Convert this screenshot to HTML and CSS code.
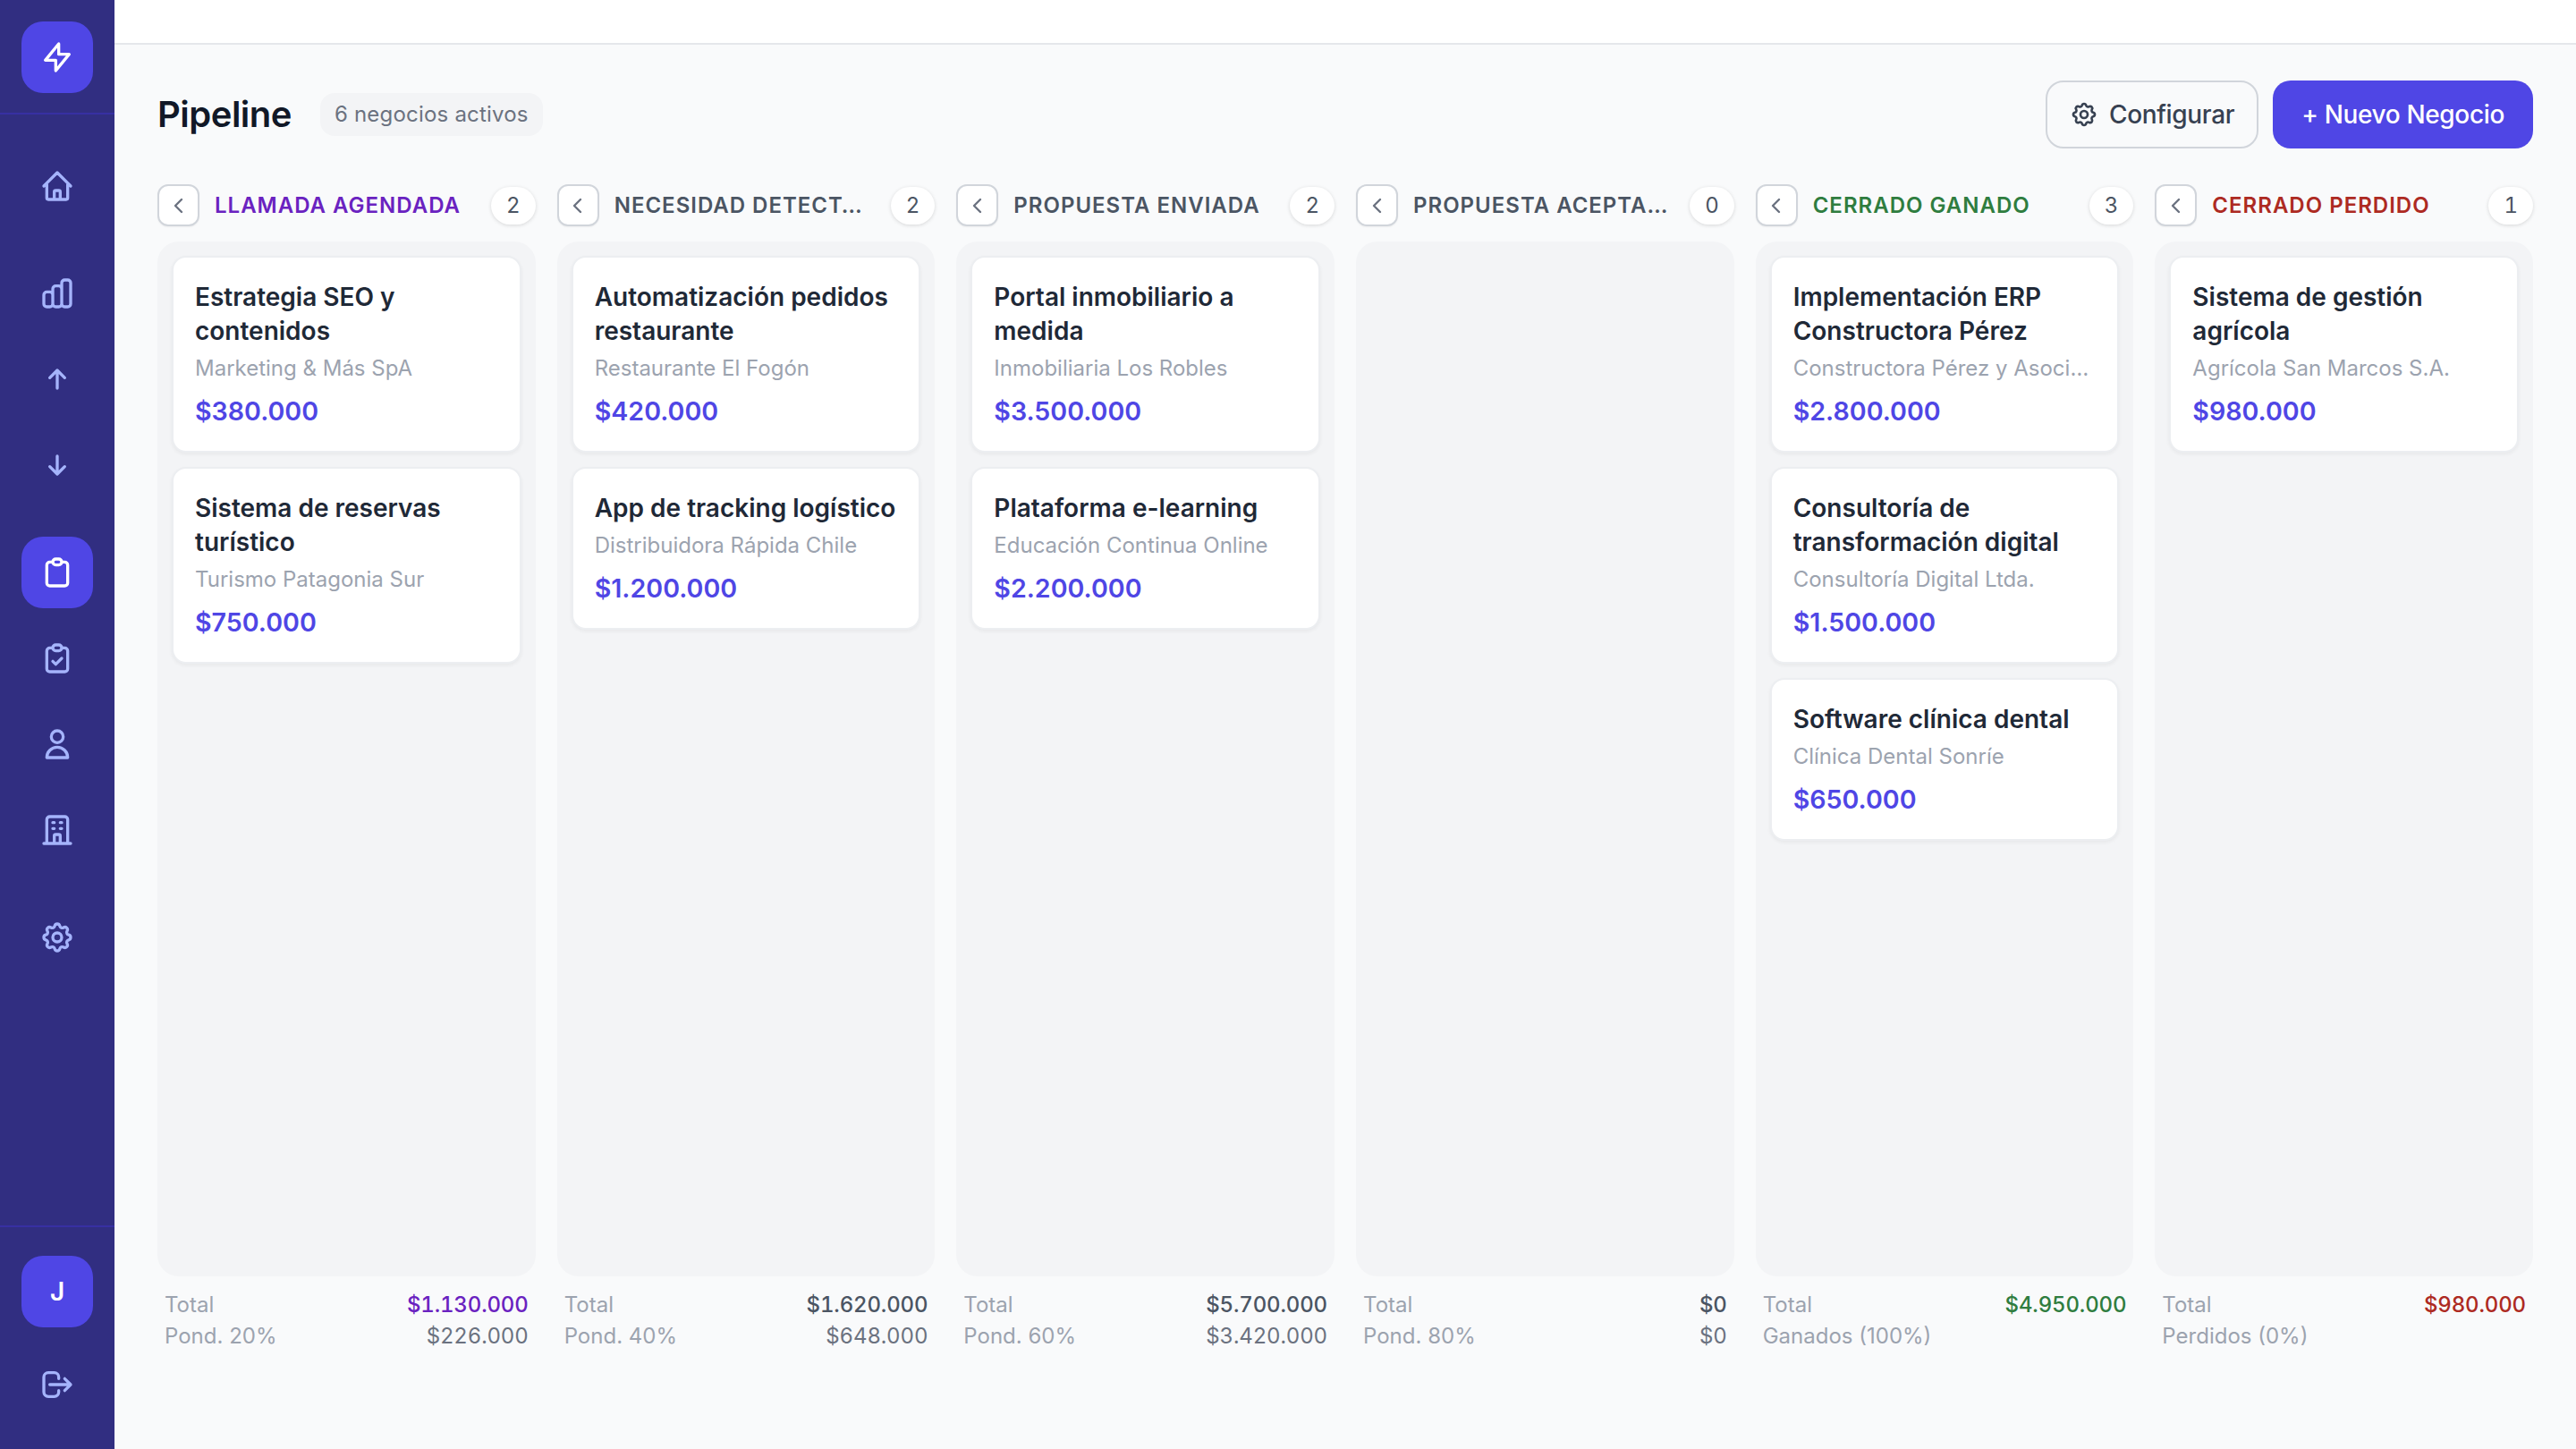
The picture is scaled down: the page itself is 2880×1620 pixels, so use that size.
FILE: index.html
```html
<!DOCTYPE html>
<html lang="es">
<head>
    <meta charset="UTF-8">
    <title>Pipeline</title>
    <link rel="stylesheet" href="styles.css">
</head>
<body>
    <aside class="sidebar">
        <div class="sidebar-top">
            <div class="nav-item active">
                <svg class="icon" viewBox="0 0 24 24"><path d="M13 10V3L4 14h7v7l9-11h-7z"/></svg>
            </div>
        </div>
        <nav class="sidebar-nav">
            <div class="nav-item">
                <svg class="icon" viewBox="0 0 24 24"><path d="M3 12l2-2m0 0l7-7 7 7M5 10v10a1 1 0 0 0 1 1h3m10-11l2 2m-2-2v10a1 1 0 0 1-1 1h-3m-6 0a1 1 0 0 0 1-1v-4a1 1 0 0 1 1-1h2a1 1 0 0 1 1 1v4a1 1 0 0 0 1 1m-6 0h6"/></svg>
            </div>
            <div class="nav-group">
                <div class="nav-item">
                    <svg class="icon" viewBox="0 0 24 24"><path d="M9 19v-6a2 2 0 0 0-2-2H5a2 2 0 0 0-2 2v6a2 2 0 0 0 2 2h2a2 2 0 0 0 2-2zm0 0V9a2 2 0 0 1 2-2h2a2 2 0 0 1 2 2v10m-6 0a2 2 0 0 0 2 2h2a2 2 0 0 0 2-2m0 0V5a2 2 0 0 1 2-2h2a2 2 0 0 1 2 2v14a2 2 0 0 1-2 2h-2a2 2 0 0 1-2-2z"/></svg>
                </div>
                <div class="nav-item">
                    <svg class="icon" viewBox="0 0 24 24"><path d="M7 11l5-5m0 0l5 5m-5-5v12"/></svg>
                </div>
                <div class="nav-item">
                    <svg class="icon" viewBox="0 0 24 24"><path d="M17 13l-5 5m0 0l-5-5m5 5V6"/></svg>
                </div>
            </div>
            <div class="nav-group">
                <div class="nav-item active">
                    <svg class="icon" viewBox="0 0 24 24"><path d="M9 5H7a2 2 0 0 0-2 2v12a2 2 0 0 0 2 2h10a2 2 0 0 0 2-2V7a2 2 0 0 0-2-2h-2M9 5a2 2 0 0 0 2 2h2a2 2 0 0 0 2-2M9 5a2 2 0 0 1 2-2h2a2 2 0 0 1 2 2"/></svg>
                </div>
                <div class="nav-item">
                    <svg class="icon" viewBox="0 0 24 24"><path d="M9 5H7a2 2 0 0 0-2 2v12a2 2 0 0 0 2 2h10a2 2 0 0 0 2-2V7a2 2 0 0 0-2-2h-2M9 5a2 2 0 0 0 2 2h2a2 2 0 0 0 2-2M9 5a2 2 0 0 1 2-2h2a2 2 0 0 1 2 2m-6 9l2 2 4-4"/></svg>
                </div>
                <div class="nav-item">
                    <svg class="icon" viewBox="0 0 24 24"><path d="M16 7a4 4 0 1 1-8 0 4 4 0 0 1 8 0zM12 14a7 7 0 0 0-7 7h14a7 7 0 0 0-7-7z"/></svg>
                </div>
                <div class="nav-item">
                    <svg class="icon" viewBox="0 0 24 24"><path d="M19 21V5a2 2 0 0 0-2-2H7a2 2 0 0 0-2 2v16m14 0h2m-2 0h-5m-9 0H3m2 0h5M9 7h1m-1 4h1m4-4h1m-1 4h1m-5 10v-5a1 1 0 0 1 1-1h2a1 1 0 0 1 1 1v5m-4 0h4"/></svg>
                </div>
            </div>
            <div class="nav-group">
                <div class="nav-item">
                    <svg class="icon" viewBox="0 0 24 24"><path d="M10.325 4.317c.426-1.756 2.924-1.756 3.35 0a1.724 1.724 0 0 0 2.573 1.066c1.543-.94 3.31.826 2.37 2.37a1.724 1.724 0 0 0 1.065 2.572c1.756.426 1.756 2.924 0 3.35a1.724 1.724 0 0 0-1.066 2.573c.94 1.543-.826 3.31-2.37 2.37a1.724 1.724 0 0 0-2.572 1.065c-.426 1.756-2.924 1.756-3.35 0a1.724 1.724 0 0 0-2.573-1.066c-1.543.94-3.31-.826-2.37-2.37a1.724 1.724 0 0 0-1.065-2.572c-1.756-.426-1.756-2.924 0-3.35a1.724 1.724 0 0 0 1.066-2.573c-.94-1.543.826-3.31 2.37-2.37.996.608 2.296.07 2.572-1.065z"/><path d="M15 12a3 3 0 1 1-6 0 3 3 0 0 1 6 0z"/></svg>
                </div>
            </div>
        </nav>
        <div class="sidebar-bottom">
            <div class="nav-item active avatar">J</div>
            <div class="nav-item">
                <svg class="icon" viewBox="0 0 24 24"><path d="M17 16l4-4m0 0l-4-4m4 4H7m6 4v1a3 3 0 0 1-3 3H6a3 3 0 0 1-3-3V7a3 3 0 0 1 3-3h4a3 3 0 0 1 3 3v1"/></svg>
            </div>
        </div>
    </aside>

    <div class="page">
        <div class="topbar"></div>
        <main class="main">
            <div class="header">
                <h1>Pipeline</h1>
                <span class="header-badge">6 negocios activos</span>
                <div class="header-actions">
                    <button class="btn btn-outline">
                        <svg class="btn-icon" viewBox="0 0 24 24"><path d="M10.325 4.317c.426-1.756 2.924-1.756 3.35 0a1.724 1.724 0 0 0 2.573 1.066c1.543-.94 3.31.826 2.37 2.37a1.724 1.724 0 0 0 1.065 2.572c1.756.426 1.756 2.924 0 3.35a1.724 1.724 0 0 0-1.066 2.573c.94 1.543-.826 3.31-2.37 2.37a1.724 1.724 0 0 0-2.572 1.065c-.426 1.756-2.924 1.756-3.35 0a1.724 1.724 0 0 0-2.573-1.066c-1.543.94-3.31-.826-2.37-2.37a1.724 1.724 0 0 0-1.065-2.572c-1.756-.426-1.756-2.924 0-3.35a1.724 1.724 0 0 0 1.066-2.573c-.94-1.543.826-3.31 2.37-2.37.996.608 2.296.07 2.572-1.065z"/><path d="M15 12a3 3 0 1 1-6 0 3 3 0 0 1 6 0z"/></svg>
                        Configurar
                    </button>
                    <button class="btn btn-primary">+ Nuevo Negocio</button>
                </div>
            </div>

            <div class="board">
                <section class="column purple">
                    <div class="column-head">
                        <button class="chevron"><svg viewBox="0 0 24 24"><path d="M15 19l-7-7 7-7"/></svg></button>
                        <span class="column-title">Llamada agendada</span>
                        <span class="count">2</span>
                    </div>
                    <div class="column-body">
                        <div class="card">
                            <div class="card-title">Estrategia SEO y contenidos</div>
                            <div class="card-client">Marketing &amp; Más SpA</div>
                            <div class="card-value">$380.000</div>
                        </div>
                        <div class="card">
                            <div class="card-title">Sistema de reservas turístico</div>
                            <div class="card-client">Turismo Patagonia Sur</div>
                            <div class="card-value">$750.000</div>
                        </div>
                    </div>
                    <div class="column-foot">
                        <div class="foot-row"><span>Total</span><span class="foot-total">$1.130.000</span></div>
                        <div class="foot-row"><span>Pond. 20%</span><span class="foot-weighted">$226.000</span></div>
                    </div>
                </section>

                <section class="column">
                    <div class="column-head">
                        <button class="chevron"><svg viewBox="0 0 24 24"><path d="M15 19l-7-7 7-7"/></svg></button>
                        <span class="column-title">Necesidad detectada</span>
                        <span class="count">2</span>
                    </div>
                    <div class="column-body">
                        <div class="card">
                            <div class="card-title">Automatización pedidos restaurante</div>
                            <div class="card-client">Restaurante El Fogón</div>
                            <div class="card-value">$420.000</div>
                        </div>
                        <div class="card">
                            <div class="card-title">App de tracking logístico</div>
                            <div class="card-client">Distribuidora Rápida Chile</div>
                            <div class="card-value">$1.200.000</div>
                        </div>
                    </div>
                    <div class="column-foot">
                        <div class="foot-row"><span>Total</span><span class="foot-total">$1.620.000</span></div>
                        <div class="foot-row"><span>Pond. 40%</span><span class="foot-weighted">$648.000</span></div>
                    </div>
                </section>

                <section class="column">
                    <div class="column-head">
                        <button class="chevron"><svg viewBox="0 0 24 24"><path d="M15 19l-7-7 7-7"/></svg></button>
                        <span class="column-title">Propuesta enviada</span>
                        <span class="count">2</span>
                    </div>
                    <div class="column-body">
                        <div class="card">
                            <div class="card-title">Portal inmobiliario a medida</div>
                            <div class="card-client">Inmobiliaria Los Robles</div>
                            <div class="card-value">$3.500.000</div>
                        </div>
                        <div class="card">
                            <div class="card-title">Plataforma e-learning</div>
                            <div class="card-client">Educación Continua Online</div>
                            <div class="card-value">$2.200.000</div>
                        </div>
                    </div>
                    <div class="column-foot">
                        <div class="foot-row"><span>Total</span><span class="foot-total">$5.700.000</span></div>
                        <div class="foot-row"><span>Pond. 60%</span><span class="foot-weighted">$3.420.000</span></div>
                    </div>
                </section>

                <section class="column">
                    <div class="column-head">
                        <button class="chevron"><svg viewBox="0 0 24 24"><path d="M15 19l-7-7 7-7"/></svg></button>
                        <span class="column-title">Propuesta aceptada</span>
                        <span class="count">0</span>
                    </div>
                    <div class="column-body"></div>
                    <div class="column-foot">
                        <div class="foot-row"><span>Total</span><span class="foot-total">$0</span></div>
                        <div class="foot-row"><span>Pond. 80%</span><span class="foot-weighted">$0</span></div>
                    </div>
                </section>

                <section class="column green">
                    <div class="column-head">
                        <button class="chevron"><svg viewBox="0 0 24 24"><path d="M15 19l-7-7 7-7"/></svg></button>
                        <span class="column-title">Cerrado ganado</span>
                        <span class="count">3</span>
                    </div>
                    <div class="column-body">
                        <div class="card">
                            <div class="card-title">Implementación ERP Constructora Pérez</div>
                            <div class="card-client">Constructora Pérez y Asociados</div>
                            <div class="card-value">$2.800.000</div>
                        </div>
                        <div class="card">
                            <div class="card-title">Consultoría de transformación digital</div>
                            <div class="card-client">Consultoría Digital Ltda.</div>
                            <div class="card-value">$1.500.000</div>
                        </div>
                        <div class="card">
                            <div class="card-title">Software clínica dental</div>
                            <div class="card-client">Clínica Dental Sonríe</div>
                            <div class="card-value">$650.000</div>
                        </div>
                    </div>
                    <div class="column-foot">
                        <div class="foot-row"><span>Total</span><span class="foot-total">$4.950.000</span></div>
                        <div class="foot-row"><span>Ganados (100%)</span></div>
                    </div>
                </section>

                <section class="column red">
                    <div class="column-head">
                        <button class="chevron"><svg viewBox="0 0 24 24"><path d="M15 19l-7-7 7-7"/></svg></button>
                        <span class="column-title">Cerrado perdido</span>
                        <span class="count">1</span>
                    </div>
                    <div class="column-body">
                        <div class="card">
                            <div class="card-title">Sistema de gestión agrícola</div>
                            <div class="card-client">Agrícola San Marcos S.A.</div>
                            <div class="card-value">$980.000</div>
                        </div>
                    </div>
                    <div class="column-foot">
                        <div class="foot-row"><span>Total</span><span class="foot-total">$980.000</span></div>
                        <div class="foot-row"><span>Perdidos (0%)</span></div>
                    </div>
                </section>
            </div>
        </main>
    </div>
</body>
</html>
```

FILE: styles.css
```css
* {
    box-sizing: border-box;
}
html, body {
    height: 100%;
}
body {
    margin: 0;
    display: flex;
    font-family: "Inter", "Noto Sans", sans-serif;
    background-color: #f9fafb;
    color: #111827;
}

/* sidebar */
.sidebar {
    width: 128px;
    flex-shrink: 0;
    display: flex;
    flex-direction: column;
    align-items: center;
    background-color: #312e81;
}
.sidebar-top {
    width: 100%;
    height: 128px;
    display: flex;
    justify-content: center;
    padding-top: 24px;
    border-bottom: 2px solid #3730a3;
}
.sidebar-nav {
    flex: 1;
    display: flex;
    flex-direction: column;
    gap: 40px;
    padding-top: 40px;
}
.nav-group {
    display: flex;
    flex-direction: column;
    gap: 16px;
}
.nav-item {
    width: 80px;
    height: 80px;
    display: flex;
    align-items: center;
    justify-content: center;
    border-radius: 24px;
    color: #a5b4fc;
}
.nav-item.active {
    background-color: #4f46e5;
    color: #fff;
}
.icon {
    width: 40px;
    height: 40px;
    fill: none;
    stroke: currentColor;
    stroke-width: 2;
    stroke-linecap: round;
    stroke-linejoin: round;
}
.sidebar-bottom {
    width: 100%;
    display: flex;
    flex-direction: column;
    align-items: center;
    gap: 24px;
    padding: 32px 0;
    border-top: 2px solid #3730a3;
}
.avatar {
    font-size: 28px;
    font-weight: 600;
}

/* main area */
.page {
    flex: 1;
    min-width: 0;
    display: flex;
    flex-direction: column;
}
.topbar {
    height: 50px;
    flex-shrink: 0;
    background-color: #fff;
    border-bottom: 2px solid #e5e7eb;
}
.main {
    flex: 1;
    min-height: 0;
    display: flex;
    flex-direction: column;
    padding: 40px 48px 110px;
}
.header {
    display: flex;
    align-items: center;
    margin-bottom: 40px;
}
.header h1 {
    margin: 0;
    font-size: 40px;
    line-height: 56px;
    font-weight: 600;
    letter-spacing: -0.5px;
}
.header-badge {
    margin-left: 32px;
    padding: 0 16px;
    font-size: 24px;
    line-height: 48px;
    letter-spacing: 0.2px;
    color: #6b7280;
    background-color: #f3f4f6;
    border-radius: 16px;
}
.header-actions {
    margin-left: auto;
    display: flex;
    gap: 16px;
}
.btn {
    height: 76px;
    display: flex;
    align-items: center;
    font-family: inherit;
    font-size: 28px;
    font-weight: 500;
    letter-spacing: -0.35px;
    border-radius: 20px;
    cursor: pointer;
}
.btn-outline {
    gap: 12px;
    padding: 0 25px;
    color: #374151;
    background-color: transparent;
    border: 2px solid #d1d5db;
}
.btn-icon {
    width: 32px;
    height: 32px;
    fill: none;
    stroke: currentColor;
    stroke-width: 2;
    stroke-linecap: round;
    stroke-linejoin: round;
}
.btn-primary {
    padding: 0 32px;
    color: #fff;
    background-color: #4f46e5;
    border: none;
}

/* board */
.board {
    flex: 1;
    min-height: 0;
    display: flex;
    gap: 24px;
}
.column {
    flex: 1;
    min-width: 0;
    display: flex;
    flex-direction: column;
    color: #4b5563;
}
.column.purple {
    color: #6a22c0;
}
.column.green {
    color: #2f7d3f;
}
.column.red {
    color: #ad2a22;
}
.column-head {
    display: flex;
    align-items: center;
    height: 47px;
    margin-bottom: 17px;
}
.chevron {
    width: 47px;
    height: 47px;
    flex-shrink: 0;
    display: flex;
    align-items: center;
    justify-content: center;
    padding: 0;
    background-color: #fff;
    border: 2px solid #d1d5db;
    border-radius: 12px;
    box-shadow: 0 1px 2px rgba(0, 0, 0, 0.05);
    cursor: pointer;
}
.chevron svg {
    width: 24px;
    height: 24px;
    fill: none;
    stroke: #6b7280;
    stroke-width: 2.4;
    stroke-linecap: round;
    stroke-linejoin: round;
}
.column-title {
    flex: 1;
    min-width: 0;
    margin: 0 16px 0 17px;
    font-size: 24px;
    font-weight: 600;
    letter-spacing: 1px;
    text-transform: uppercase;
    white-space: nowrap;
    overflow: hidden;
    text-overflow: ellipsis;
}
.count {
    flex-shrink: 0;
    padding: 0 17px;
    font-size: 24px;
    line-height: 42px;
    font-variant-numeric: tabular-nums;
    color: #4b5563;
    background-color: #fff;
    border-radius: 21px;
    box-shadow: 0 1px 4px rgba(0, 0, 0, 0.14);
}
.column-body {
    flex: 1;
    display: flex;
    flex-direction: column;
    gap: 16px;
    padding: 16px;
    background-color: #f3f4f6;
    border-radius: 24px;
}
.card {
    padding: 25px 24px 24px;
    background-color: #fff;
    border: 2px solid #eceef1;
    border-radius: 16px;
    box-shadow: 0 2px 4px rgba(0, 0, 0, 0.05);
}
.card-title {
    font-size: 28px;
    line-height: 38px;
    font-weight: 600;
    color: #1f2937;
}
.card-client {
    margin-top: 7px;
    font-size: 24px;
    line-height: 32px;
    color: #9ca3af;
    white-space: nowrap;
    overflow: hidden;
    text-overflow: ellipsis;
}
.card-value {
    margin-top: 12px;
    font-size: 28.6px;
    line-height: 40px;
    font-weight: 600;
    color: #4f46e5;
}
.column-foot {
    display: flex;
    flex-direction: column;
    gap: 3px;
    padding: 16px 8px 0;
}
.foot-row {
    display: flex;
    justify-content: space-between;
    font-size: 24px;
    line-height: 32px;
    color: #9ca3af;
}
.foot-total,
.foot-weighted {
    font-variant-numeric: tabular-nums;
    letter-spacing: -0.15px;
}
.foot-total {
    font-weight: 500;
    color: #4b5563;
}
.purple .foot-total {
    color: #6a22c0;
}
.green .foot-total {
    color: #2f7d3f;
}
.red .foot-total {
    color: #ad2a22;
}
.foot-weighted {
    color: #6b7280;
}
```
